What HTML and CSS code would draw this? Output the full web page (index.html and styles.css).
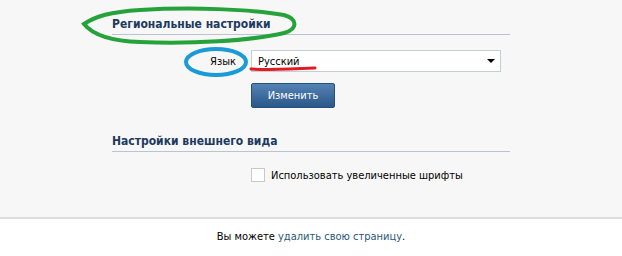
FILE: index.html
```html
<html lang="ru">
<head>
    <meta charset="UTF-8">
    <title>Настройки</title>
    <link rel="stylesheet" href="styles.css">
</head>
<body>
    <main class="settings">
        <div class="block">
            <div class="title">Региональные настройки</div>
            <div class="row">
                <label class="label">Язык</label>
                <div class="select">
                    <span>Русский</span>
                    <span class="arrow"></span>
                </div>
            </div>
            <div class="row">
                <span></span>
                <div><button type="button" class="button">Изменить</button></div>
            </div>
        </div>
        <div class="block">
            <div class="title">Настройки внешнего вида</div>
            <div class="row check">
                <span></span>
                <label class="checkbox"><span class="box"></span>Использовать увеличенные шрифты</label>
            </div>
        </div>
    </main>
    <footer class="footer">
        Вы можете <a href="#">удалить свою страницу</a>.
    </footer>
    <svg class="marks" width="622" height="256" viewBox="0 0 622 256">
        <!-- green ring round the first title -->
        <path class="mark-green" d="M84 24 C 96 16, 110 12, 140 10 C 190 7, 250 9, 284 15 C 298 19, 298 29, 284 33 C 250 41, 190 44, 140 42 C 110 41, 92 34, 84 24 Z"/>
        <!-- blue ring round the label -->
        <ellipse class="mark-blue" cx="216" cy="62" rx="30" ry="13"/>
        <!-- red underline -->
        <path class="mark-red" d="M251 69 C 270 70, 295 69, 315 68"/>
    </svg>
</body>
</html>
```

FILE: styles.css
```css
*{
    --color-bg:#f7f7f7;
    --color-title:#1d3a60;
    --color-line:#b9c4d2;
    --color-link:#2b587a;
}
body{
    margin: 0;
    font-family: Tahoma, "DejaVu Sans Condensed", "Liberation Sans", sans-serif;
    font-size: 11px;
    color: #000;
    background-color: #fff;
}
.settings{
    background-color: var(--color-bg);
    padding: 17px 0 35px;
    border-bottom: 2px solid #dedede;
    display: flex;
    flex-direction: column;
    align-items: center;
    gap: 15px;
}
.block{
    width: 398px;
    display: flex;
    flex-direction: column;
}
.title{
    font-weight: bold;
    font-size: 12px;
    color: var(--color-title);
    line-height: 14px;
    padding-bottom: 3px;
    border-bottom: 1px solid var(--color-line);
    margin-bottom: 15px;
}
.row{
    display: grid;
    grid-template-columns: 124px 250px;
    column-gap: 15px;
    align-items: center;
    margin-bottom: 11px;
}
.label{
    text-align: right;
}
.select{
    height: 22px;
    box-sizing: border-box;
    border: 1px solid #c5cdd6;
    background-color: #fff;
    display: flex;
    align-items: center;
    justify-content: space-between;
    padding: 0 5px 0 6px;
}
.arrow{
    width: 0;
    height: 0;
    border-left: 4px solid transparent;
    border-right: 4px solid transparent;
    border-top: 4px solid #000;
}
.button{
    font: inherit;
    color: #fff;
    width: 84px;
    height: 25px;
    border: 1px solid #25507d;
    border-radius: 2px;
    background: linear-gradient(#5582b5, #2a5888);
    cursor: pointer;
}
.check{
    margin-top: 1px;
    margin-bottom: 0;
}
.checkbox{
    display: flex;
    align-items: center;
    gap: 6px;
}
.box{
    width: 12px;
    height: 12px;
    border: 1px solid #c9c9c9;
    background-color: #fff;
}
.footer{
    text-align: center;
    padding-top: 11px;
    line-height: 14px;
    & a{
        color: var(--color-link);
        text-decoration: none;
    }
}
.marks{
    position: absolute;
    left: 0;
    top: 0;
    pointer-events: none;
    fill: none;
    stroke-linecap: round;
}
.mark-green{
    stroke: #25a33a;
    stroke-width: 4;
}
.mark-blue{
    stroke: #1b9ad8;
    stroke-width: 4;
}
.mark-red{
    stroke: #e01b24;
    stroke-width: 3;
}
```
